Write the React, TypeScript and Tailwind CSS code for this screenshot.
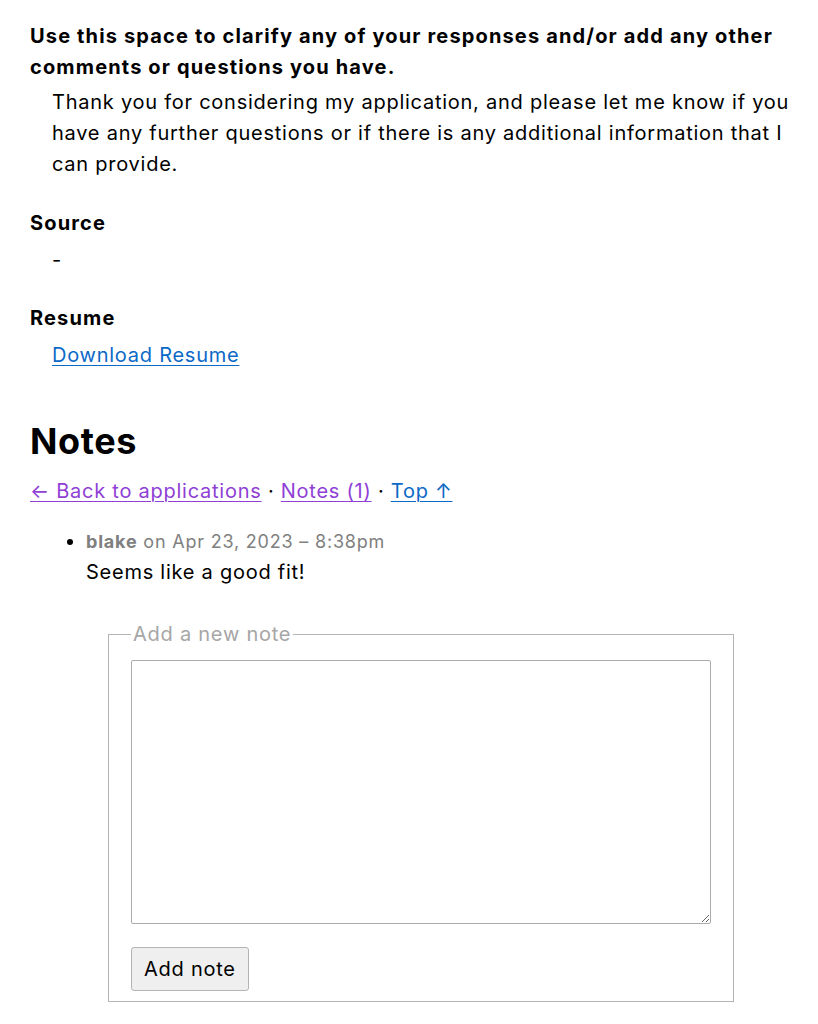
export default function App() {
  return (
    <div className="min-h-screen bg-white pl-[30px] pr-[16px] pt-[21px] pb-[20px] text-[20px] leading-[31px] tracking-[0.75px] text-black [font-family:Inter,'Liberation_Sans',sans-serif]">
      <dl>
        <dt className="font-bold tracking-[1.15px]">
          Use this space to clarify any of your responses and/or add any other comments or questions you have.
        </dt>
        <dd className="ml-[22px] mt-[4px] mb-[28px]">
          Thank you for considering my application, and please let me know if you have any further questions or if
          there is any additional information that I can provide.
        </dd>

        <dt className="font-bold tracking-[1.15px]">Source</dt>
        <dd className="ml-[22px] mt-[6px] mb-[27px]">-</dd>

        <dt className="font-bold tracking-[1.15px]">Resume</dt>
        <dd className="ml-[22px] mt-[6px]">
          <a href="#" className="text-[#0b69c7] underline underline-offset-[3px] decoration-1">
            Download Resume
          </a>
        </dd>
      </dl>

      {/* notes */}
      <h2 className="mt-[48px] text-[36px] leading-[44px] font-bold tracking-[0.6px]">Notes</h2>
      <div className="mt-[13px]">
        <a href="#" className="text-[#8f3fd5] underline underline-offset-[3px] decoration-1">
          ← Back to applications
        </a>{' '}
        ·{' '}
        <a href="#" className="text-[#8f3fd5] underline underline-offset-[3px] decoration-1">
          Notes (1)
        </a>{' '}
        ·{' '}
        <a href="#" className="text-[#0b69c7] underline underline-offset-[3px] decoration-1">
          Top ↑
        </a>
      </div>

      <ul className="mt-[19px] list-disc pl-[56px]">
        <li>
          <div className="text-[18px] tracking-[0.8px] text-[#808080]">
            <strong className="font-bold">blake</strong> on Apr 23, 2023 – 8:38pm
          </div>
          <div>Seems like a good fit!</div>
        </li>
      </ul>

      <form className="ml-[78px] mt-[34px] w-[626px]" onSubmit={e => e.preventDefault()}>
        <fieldset className="border border-[#b4b4b4] px-[22px] pb-[10px] pt-[0px]">
          <legend className="px-[2px] text-[#a6a6a6] leading-[24px]">Add a new note</legend>
          <textarea className="mt-[14px] block h-[264px] w-full rounded-[2px] border border-[#ababab] resize-y" />
          <button
            type="submit"
            className="mt-[23px] h-[44px] rounded-[3px] border border-[#b4b4b4] bg-[#efefef] px-[12px] text-[20px]"
          >
            Add note
          </button>
        </fieldset>
      </form>
    </div>
  );
}
